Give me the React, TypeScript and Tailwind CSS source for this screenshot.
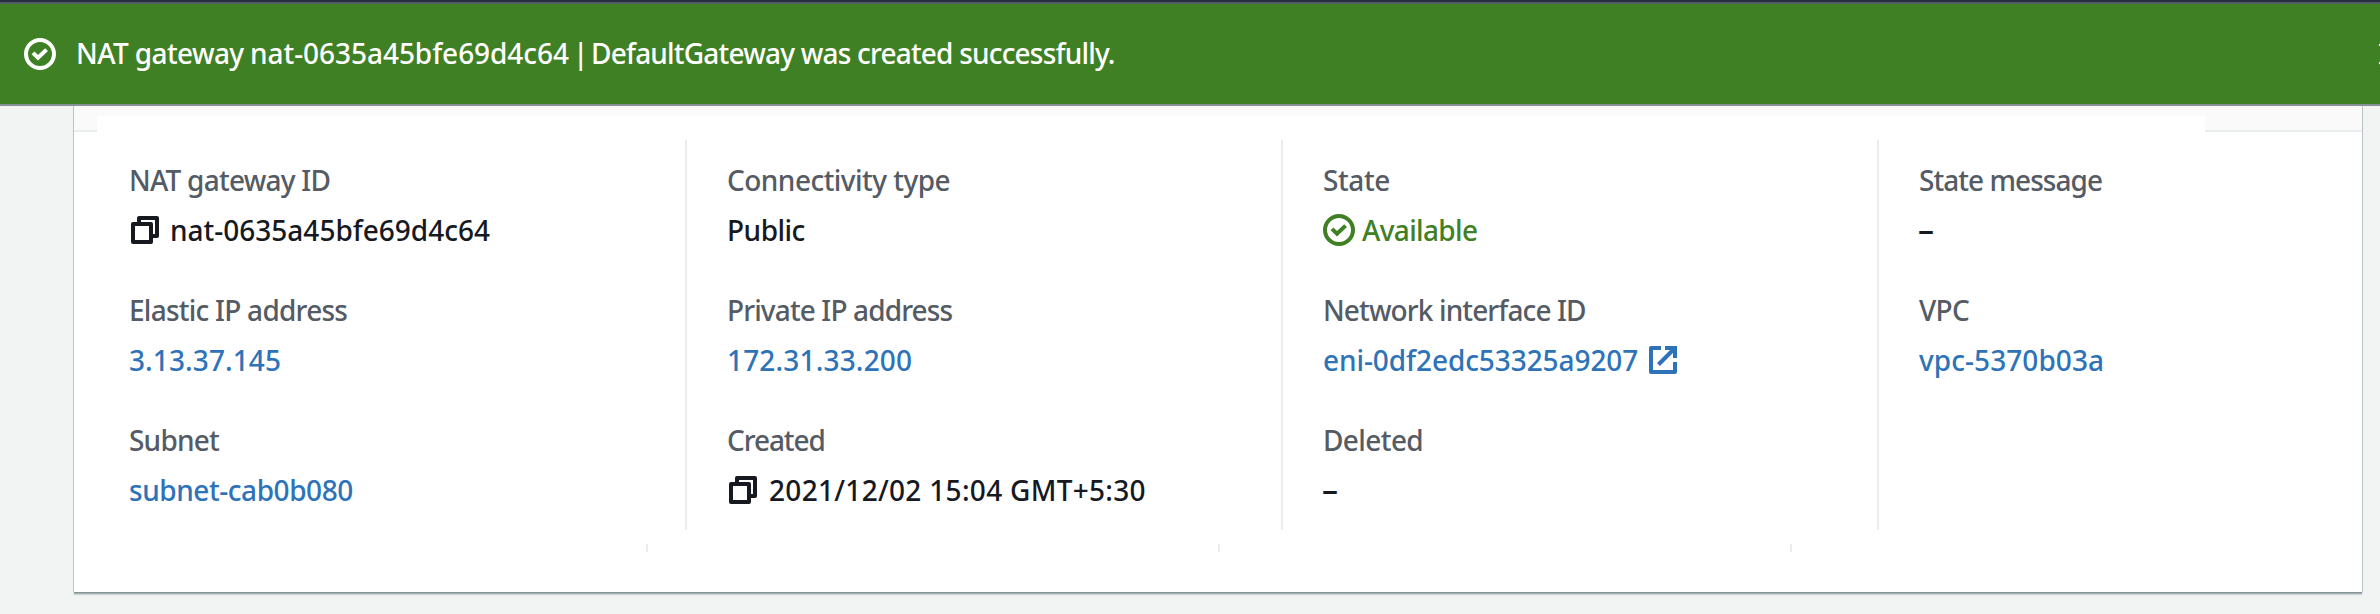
import React from "react";

type IconProps = { className?: string };

function CheckCircleIcon({ className = "" }: IconProps) {
  return (
    <svg viewBox="0 0 32 32" fill="none" stroke="currentColor" strokeWidth="4" className={`h-8 w-8 shrink-0 ${className}`}>
      <circle cx="16" cy="16" r="14" />
      <path d="M9 14.9 14 19.8 22.6 11.6" />
    </svg>
  );
}

function CopyIcon({ className = "" }: IconProps) {
  return (
    <svg viewBox="0 0 28 28" fill="none" stroke="currentColor" strokeWidth="4" strokeLinejoin="round" className={`h-7 w-7 shrink-0 ${className}`}>
      <rect x="2" y="8" width="18" height="18" />
      <path d="M8 7V2H26V20H21" />
    </svg>
  );
}

function ExternalIcon({ className = "" }: IconProps) {
  return (
    <svg viewBox="0 0 28 28" fill="none" stroke="currentColor" strokeWidth="4" className={`h-7 w-7 shrink-0 ${className}`}>
      <path d="M12 2H2V26H26V16" strokeLinejoin="round" />
      <path d="M16 2H26V12" />
      <path d="M9.5 18.5 24.5 3.5" />
    </svg>
  );
}

function CloseIcon({ className = "" }: IconProps) {
  return (
    <svg viewBox="0 0 28 28" fill="none" stroke="currentColor" strokeWidth="4" className={`h-7 w-7 shrink-0 ${className}`}>
      <path d="M2 3.5 23 24.5M23 3.5 2 24.5" />
    </svg>
  );
}

function Field({ label, tracking, children }: { label: string; tracking: string; children: React.ReactNode }) {
  return (
    <div className="flex flex-col gap-2.5">
      <div className={`h-10 text-[#545b64] ${tracking}`}>{label}</div>
      <div className="flex h-10 items-start text-[#16191f]">{children}</div>
    </div>
  );
}

function Link({ tracking, children }: { tracking: string; children: string }) {
  return (
    <a href="#" className={`text-[#2e73b8] ${tracking}`}>
      {children}
    </a>
  );
}

function Empty() {
  return <span className="-ml-px text-[32px] leading-[38px] font-medium">–</span>;
}

export default function App() {
  return (
    <div className="flex h-[614px] w-[2380px] flex-col overflow-hidden bg-[#f2f3f3] font-['Noto_Sans',sans-serif] text-[28px] leading-10 font-medium whitespace-nowrap">
      <div className="h-1 shrink-0 border-b-2 border-[#545b64] bg-[#232f3e]" />
      <div className="flex h-[102px] shrink-0 items-start overflow-hidden border-b-2 border-[#879196] bg-[#3f8024] pt-[29px] pl-6 text-white">
        <CheckCircleIcon className="mt-[5px]" />
        <div className="ml-5 flex whitespace-pre">
          <span className="w-[174px] tracking-[-0.6px]">NAT gateway </span>
          <span className="w-[323px] tracking-[-0.05px]">nat-0635a45bfe69d4c64 </span>
          <span className="w-[18px]">| </span>
          <span className="tracking-[-0.8px]">DefaultGateway was created successfully.</span>
        </div>
        <CloseIcon className="mt-[7px] -mr-[26px] ml-auto" />
      </div>

      <div className="ml-[74px] flex h-[486px] w-[2288px] shrink-0 flex-col bg-white shadow-[0_1px_0_0_#879596,0_2px_1px_0_#a5afb2,-1px_0_0_0_#c0c6c9,1px_0_0_0_#c0c6c9,0_3px_1px_0_#d5dbdb]">
        <div className="h-2.5 shrink-0 bg-[#fafafa]" />
        <div className="flex h-4 shrink-0 justify-between">
          <div className="w-[23px] border-b-2 border-[#eaeded] bg-[#fafafa]" />
          <div className="w-[157px] border-b-2 border-[#eaeded] bg-[#fafafa]" />
        </div>

        <div className="mt-2 flex h-[390px] shrink-0">
          <div className="flex w-[611px] flex-col gap-10 pt-5 pl-[55px]">
            <Field label="NAT gateway ID" tracking="tracking-[-0.76px]">
              <CopyIcon className="mt-1.5 ml-0.5" />
              <span className="ml-[11px]">nat-0635a45bfe69d4c64</span>
            </Field>
            <Field label="Elastic IP address" tracking="tracking-[-0.75px]">
              <Link tracking="tracking-[0.1px]">3.13.37.145</Link>
            </Field>
            <Field label="Subnet" tracking="tracking-[-0.78px]">
              <Link tracking="tracking-[-0.44px]">subnet-cab0b080</Link>
            </Field>
          </div>

          <div className="flex w-[596px] flex-col gap-10 border-l-2 border-[#eaeded] pt-5 pl-10">
            <Field label="Connectivity type" tracking="tracking-[-0.53px]">
              <span className="tracking-[-0.5px]">Public</span>
            </Field>
            <Field label="Private IP address" tracking="tracking-[-0.87px]">
              <Link tracking="tracking-[0.17px]">172.31.33.200</Link>
            </Field>
            <Field label="Created" tracking="tracking-[-1.08px]">
              <CopyIcon className="mt-1.5 ml-0.5" />
              <span className="ml-3 tracking-[0.3px]">2021/12/02 15:04 GMT+5:30</span>
            </Field>
          </div>

          <div className="flex w-[596px] flex-col gap-10 border-l-2 border-[#eaeded] pt-5 pl-10">
            <Field label="State" tracking="tracking-[-0.38px]">
              <span className="flex text-[#3f8024]">
                <CheckCircleIcon className="mt-1" />
                <span className="ml-[7px] tracking-[-0.66px]">Available</span>
              </span>
            </Field>
            <Field label="Network interface ID" tracking="tracking-[-0.88px]">
              <Link tracking="tracking-[-0.08px]">eni-0df2edc53325a9207</Link>
              <ExternalIcon className="mt-1.5 ml-[11px] text-[#2e73b8]" />
            </Field>
            <Field label="Deleted" tracking="tracking-[-0.6px]">
              <Empty />
            </Field>
          </div>

          <div className="flex flex-1 flex-col gap-10 border-l-2 border-[#eaeded] pt-5 pl-10">
            <Field label="State message" tracking="tracking-[-0.95px]">
              <Empty />
            </Field>
            <Field label="VPC" tracking="tracking-[-0.65px]">
              <Link tracking="tracking-[0.06px]">vpc-5370b03a</Link>
            </Field>
          </div>
        </div>

        <div className="mt-3.5 ml-[572px] flex h-2 w-[1146px] justify-between">
          <div className="w-0.5 bg-[#eaeded]" />
          <div className="w-0.5 bg-[#eaeded]" />
          <div className="w-0.5 bg-[#eaeded]" />
        </div>
      </div>
    </div>
  );
}
